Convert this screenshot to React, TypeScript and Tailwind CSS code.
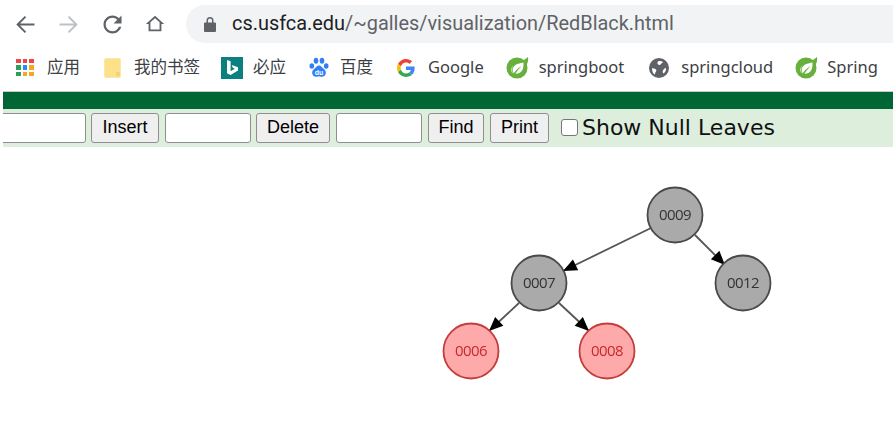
import React from 'react';

type Node = { x: number; y: number; label: string; red?: boolean };
type Edge = { x1: number; y1: number; x2: number; y2: number };

const NODES: Node[] = [
  { x: 675, y: 215, label: '0009' },
  { x: 539, y: 283, label: '0007' },
  { x: 743, y: 283, label: '0012' },
  { x: 471, y: 351, label: '0006', red: true },
  { x: 607, y: 351, label: '0008', red: true },
];

const EDGES: Edge[] = [
  { x1: 651, y1: 228, x2: 563, y2: 271 },
  { x1: 695, y1: 235, x2: 725, y2: 265 },
  { x1: 519, y1: 303, x2: 489, y2: 331 },
  { x1: 559, y1: 303, x2: 589, y2: 331 },
];

function arrowHead({ x1, y1, x2, y2 }: Edge) {
  const len = Math.hypot(x2 - x1, y2 - y1);
  const ux = (x2 - x1) / len;
  const uy = (y2 - y1) / len;
  const bx = x2 - ux * 14;
  const by = y2 - uy * 14;
  return `${x2},${y2} ${bx - uy * 6},${by + ux * 6} ${bx + uy * 6},${by - ux * 6}`;
}

function NavIcon({ d, color = '#5f6368', size = 27 }: { d: string; color?: string; size?: number }) {
  return (
    <svg width={size} height={size} viewBox="0 0 24 24" fill={color}>
      <path d={d} />
    </svg>
  );
}

function ArrowIcon({ d, color }: { d: string; color: string }) {
  return (
    <svg width="27" height="27" viewBox="0 0 24 24" fill="none" stroke={color} strokeWidth="1.700">
      <path d={d} />
    </svg>
  );
}

function AppsIcon() {
  const colors = ['#ef4444', '#ef4444', '#ef4444', '#2f9e5b', '#2b8cf0', '#f5a623', '#2f9e5b', '#f5a623', '#f5a623'];
  return (
    <div className="grid grid-cols-3 gap-[2px] w-[18px]">
      {colors.map((c, i) => (
        <div key={i} className="w-[4.6px] h-[4.6px]" style={{ backgroundColor: c }} />
      ))}
    </div>
  );
}

function FolderIcon() {
  return (
    <svg width="17" height="20" viewBox="0 0 17 20">
      <rect x="0.5" y="0.5" width="16" height="19" rx="1.5" fill="#fde08a" stroke="#fbe9a8" />
      <path d="M13 18v-3a1 1 0 0 1 2 0v3" fill="none" stroke="#e9c65c" />
    </svg>
  );
}

function BingIcon() {
  return (
    <svg width="22" height="22" viewBox="0 0 22 22">
      <rect width="22" height="22" fill="#0b8080" />
      <path d="M6 3l3.6 1.2v10l4.2-2.4-2-1-1.1-2.8 6.3 2.2v3.4l-7.4 4.4L6 16.2z" fill="#fff" />
    </svg>
  );
}

function PawIcon() {
  return (
    <svg width="20" height="21" viewBox="0 0 20 21" fill="#2f80f5">
      <ellipse cx="2.8" cy="9" rx="2.3" ry="2.8" />
      <ellipse cx="7" cy="3.8" rx="2.3" ry="3" />
      <ellipse cx="13" cy="3.8" rx="2.3" ry="3" />
      <ellipse cx="17.2" cy="9" rx="2.3" ry="2.8" />
      <path d="M10 8.5c2.2 0 3 2 4.6 3.3 1.6 1.3 2.4 2.4 2.2 4.4-.3 2.6-2.6 3.8-4.6 3.5-1-.1-1.5-.4-2.2-.4s-1.2.3-2.2.4c-2 .3-4.3-.9-4.6-3.5-.2-2 .6-3.1 2.2-4.4C7 10.5 7.8 8.5 10 8.5z" />
      <text x="10" y="17.5" textAnchor="middle" fontSize="7" fontWeight="700" fill="#fff" fontFamily="'Liberation Sans', sans-serif">du</text>
    </svg>
  );
}

function GoogleIcon() {
  return (
    <svg width="18" height="18" viewBox="0 0 48 48">
      <path fill="#EA4335" d="M24 9.5c3.5 0 6.7 1.2 9.2 3.6l6.9-6.9C35.9 2.4 30.5 0 24 0 14.6 0 6.5 5.4 2.6 13.2l8 6.2C12.5 13.7 17.8 9.5 24 9.5z" />
      <path fill="#4285F4" d="M47 24.5c0-1.6-.1-3.1-.4-4.5H24v9h12.9c-.6 3-2.2 5.5-4.7 7.2l7.7 6c4.5-4.2 7.1-10.3 7.1-17.7z" />
      <path fill="#FBBC05" d="M10.5 28.6c-.5-1.4-.8-3-.8-4.6s.3-3.2.8-4.6l-8-6.2C.9 16.5 0 20.100 0 24s.9 7.500 2.600 10.800l7.900-6.200z" />
      <path fill="#34A853" d="M24 48c6.500 0 11.900-2.100 15.900-5.800l-7.700-6c-2.200 1.500-4.900 2.300-8.200 2.300-6.200 0-11.500-4.200-13.400-9.900l-8 6.200C6.500 42.600 14.600 48 24 48z" />
    </svg>
  );
}

function SpringIcon() {
  return (
    <svg width="23" height="23" viewBox="0 0 23 23">
      <circle cx="11" cy="12" r="10.500" fill="#68b03c" />
      <path d="M22 1c.6 3-.2 6-1.500 8L15 5c2.500-.8 5-2 7-4z" fill="#68b03c" />
      <path d="M17.500 6.500c-3.200.8-8 1.200-10 4.600-1.400 2.500-.9 5 .5 6.500 3.500.6 7.300-.6 8.700-4.300.7-2 .9-4.500.8-6.800z" fill="#fff" />
      <path d="M7 9.500c-2 2-2.500 5-1 7.300.3.400.6.700 1 1-1.300-2.400-1.200-5.500 0-8.300z" fill="#cfe8bd" />
      <path d="M7 18.500c2-3.500 5-6.200 8.500-8.500-2.200 2.500-4.500 5.200-6.800 9z" fill="#68b03c" />
    </svg>
  );
}

function GlobeIcon() {
  return (
    <svg width="20" height="20" viewBox="0 0 20 20">
      <circle cx="10" cy="10" r="10" fill="#5f6368" />
      <path d="M9.500 3c1.800-.3 3.500.2 4.500 1-.5 1.300-1.800 1.500-2.500 2.500-.7 1-1.800.5-2.700-.2C8 5.500 8.500 3.800 9.500 3zM3 10.500c1.500-.5 3.500.3 4.300 1.600.4 1.200-.9 2-1.100 3-.2.700-.3 1.200-.6 1.500C3.900 15.200 3 13 3 10.500zM17 10c.2 2.300-.7 4.300-2.500 5.500-.8-.8-1.100-2.200-.4-3.300.6-1.100 1.800-2.400 2.900-2.200z" fill="#fff" />
    </svg>
  );
}

export default function App() {
  return (
    <div className="w-[895px] h-[436px] bg-white overflow-hidden flex flex-col">
      {/* Browser toolbar */}
      <div className="h-12 flex items-center shrink-0">
        <div className="ml-[12px]">
          <ArrowIcon color="#5f6368" d="M20 12H5M12 5l-7 7 7 7" />
        </div>
        <div className="ml-[16px]">
          <ArrowIcon color="#bdc1c6" d="M4 12h15M12 5l7 7-7 7" />
        </div>
        <div className="ml-[17px]">
          <NavIcon d="M17.650 6.350C16.200 4.900 14.210 4 12 4c-4.420 0-7.990 3.580-7.990 8s3.570 8 7.990 8c3.730 0 6.840-2.550 7.730-6h-2.080c-.820 2.330-3.040 4-5.650 4-3.310 0-6-2.690-6-6s2.690-6 6-6c1.660 0 3.140.690 4.220 1.780L13 11h7V4l-2.350 2.350z" />
        </div>
        <div className="ml-[18px]">
          <NavIcon size={22} d="M12 3L2 12h3v8h14v-8h3L12 3zm0 2.690l5 4.500V18H7v-7.810l5-4.500z" />
        </div>
        <div className="ml-[20px] mr-[2px] flex-1 h-[38px] rounded-l-full bg-[#f1f3f4] flex items-center pl-[17px]">
          <svg width="14" height="16" viewBox="0 0 14 16" fill="#5f6368">
            <path d="M2 6.500h1.500V4.500a3.500 3.500 0 0 1 7 0v2H12a1 1 0 0 1 1 1V15a1 1 0 0 1-1 1H2a1 1 0 0 1-1-1V7.500a1 1 0 0 1 1-1zm3-2v2h4v-2a2 2 0 0 0-4 0z" />
          </svg>
          <div className="ml-[15px] text-[19.900px] text-[#5f6368] font-['Roboto',sans-serif] whitespace-nowrap">
            <span className="text-[#202124]">cs.usfca.edu</span>/~galles/visualization/RedBlack.html
          </div>
        </div>
      </div>

      {/* Bookmarks */}
      <div className="h-[43px] flex items-center pb-[4px] shrink-0 text-[16.500px] text-[#3c4043] font-['Noto_Sans','Noto_Sans_CJK_SC',sans-serif] whitespace-nowrap">
        <div className="ml-[16px]"><AppsIcon /></div>
        <span className="ml-[13px]">应用</span>
        <div className="ml-[24px]"><FolderIcon /></div>
        <span className="ml-[13px]">我的书签</span>
        <div className="ml-[21px]"><BingIcon /></div>
        <span className="ml-[10px]">必应</span>
        <div className="ml-[23px]"><PawIcon /></div>
        <span className="ml-[11px]">百度</span>
        <div className="ml-[24px]"><GoogleIcon /></div>
        <span className="ml-[13px]">Google</span>
        <div className="ml-[22px]"><SpringIcon /></div>
        <span className="ml-[10px]">springboot</span>
        <div className="ml-[25px]"><GlobeIcon /></div>
        <span className="ml-[12px]">springcloud</span>
        <div className="ml-[22px]"><SpringIcon /></div>
        <span className="ml-[9px]">Spring</span>
      </div>

      {/* Page controls */}
      <div className="ml-[3px] mr-[2px] shrink-0 border-t border-[#c8c8c8]">
        <div className="h-[17px] bg-[#006633]" />
        <div className="h-[38px] bg-[#ddeedd] flex items-center gap-[5px] overflow-hidden pb-[1px] text-[18px] text-black font-['Liberation_Sans',sans-serif]">
          <input className="-ml-[3px] w-[86px] h-[30px] bg-white border border-[#8f8f8f] rounded-[3px]" />
          <button className="w-[68px] h-[30px] bg-[#efefef] border border-[#8f8f8f] rounded-[3px]">Insert</button>
          <input className="ml-[1px] w-[86px] h-[30px] bg-white border border-[#8f8f8f] rounded-[3px]" />
          <button className="w-[74px] h-[30px] bg-[#efefef] border border-[#8f8f8f] rounded-[3px]">Delete</button>
          <input className="ml-[1px] w-[86px] h-[30px] bg-white border border-[#8f8f8f] rounded-[3px]" />
          <button className="ml-[1px] w-[56px] h-[30px] bg-[#efefef] border border-[#8f8f8f] rounded-[3px]">Find</button>
          <button className="ml-[1px] w-[59px] h-[30px] bg-[#efefef] border border-[#8f8f8f] rounded-[3px]">Print</button>
          <div className="ml-[7px] w-[17px] h-[17px] bg-white border border-[#767676] rounded-[3px]" />
          <span className="-ml-[1px] text-[22px] text-[#111] font-['DejaVu_Sans',sans-serif] whitespace-nowrap">Show Null Leaves</span>
        </div>
      </div>

      {/* Tree drawing */}
      <svg className="block blur-[0.5px]" width="895" height="289" viewBox="0 147 895 289">
        {EDGES.map((e, i) => (
          <g key={i}>
            <line x1={e.x1} y1={e.y1} x2={e.x2} y2={e.y2} stroke="#555" strokeWidth="1.800" />
            <polygon points={arrowHead(e)} fill="#000" />
          </g>
        ))}
        {NODES.map((n) => (
          <g key={n.label}>
            <circle cx={n.x} cy={n.y} r="27.500" fill={n.red ? '#ffaaaa' : '#aaaaaa'} stroke={n.red ? '#c43c3c' : '#4a4a4a'} strokeWidth="1.800" />
            <text
              x={n.x}
              y={n.y + 4.5}
              textAnchor="middle"
              fontSize="15"
              letterSpacing="-0.6"
              fill={n.red ? '#c8282e' : '#333'}
              fontFamily="'Open Sans', sans-serif"
            >
              {n.label}
            </text>
          </g>
        ))}
      </svg>
    </div>
  );
}
